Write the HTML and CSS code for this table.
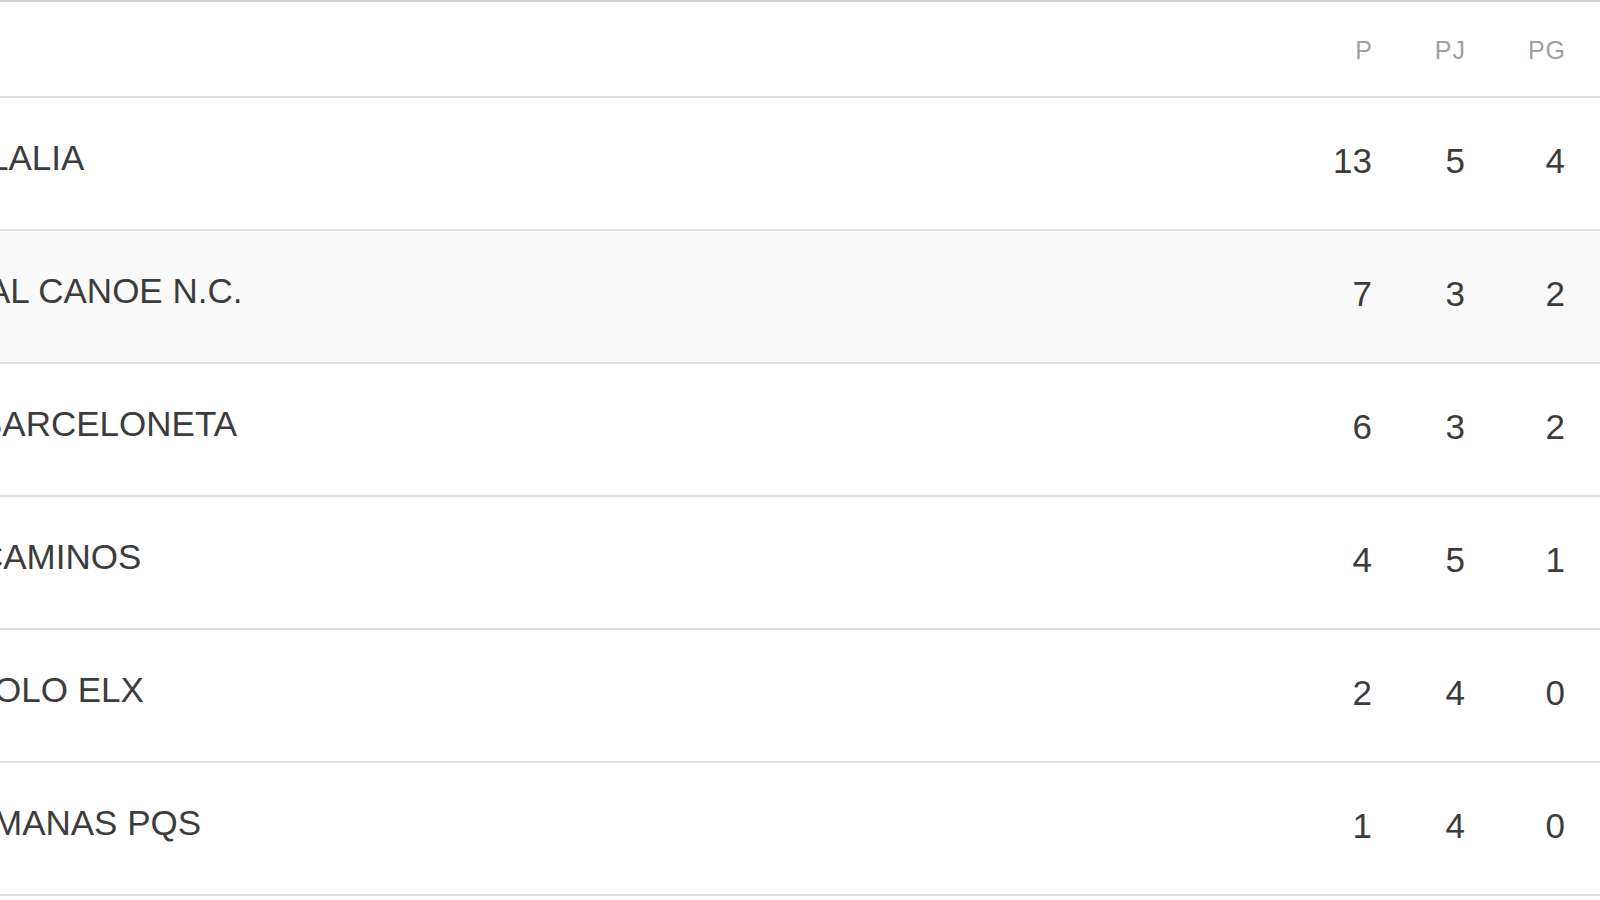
FILE: index.html
```html
<!DOCTYPE html>
<html lang="es">
<head>
<meta charset="utf-8">
<title>Clasificación</title>
<link rel="stylesheet" href="styles.css">
</head>
<body>
<div class="standings">
  <div class="row row--head">
    <div class="cell cell--name"></div>
    <div class="cell cell--num"><span class="head-label">P</span></div>
    <div class="cell cell--num cell--mid"><span class="head-label">PJ</span></div>
    <div class="cell cell--num"><span class="head-label">PG</span></div>
  </div>
  <div class="row">
    <div class="cell cell--name"><span class="name name--c1">LALIA</span></div>
    <div class="cell cell--num">13</div>
    <div class="cell cell--num cell--mid">5</div>
    <div class="cell cell--num">4</div>
  </div>
  <div class="row row--alt">
    <div class="cell cell--name"><span class="name name--c2">AL CANOE N.C.</span></div>
    <div class="cell cell--num">7</div>
    <div class="cell cell--num cell--mid">3</div>
    <div class="cell cell--num">2</div>
  </div>
  <div class="row">
    <div class="cell cell--name"><span class="name name--c3">BARCELONETA</span></div>
    <div class="cell cell--num">6</div>
    <div class="cell cell--num cell--mid">3</div>
    <div class="cell cell--num">2</div>
  </div>
  <div class="row">
    <div class="cell cell--name"><span class="name name--c4">CAMINOS</span></div>
    <div class="cell cell--num">4</div>
    <div class="cell cell--num cell--mid">5</div>
    <div class="cell cell--num">1</div>
  </div>
  <div class="row">
    <div class="cell cell--name"><span class="name name--c5">OLO ELX</span></div>
    <div class="cell cell--num">2</div>
    <div class="cell cell--num cell--mid">4</div>
    <div class="cell cell--num">0</div>
  </div>
  <div class="row">
    <div class="cell cell--name"><span class="name name--c6">MANAS PQS</span></div>
    <div class="cell cell--num">1</div>
    <div class="cell cell--num cell--mid">4</div>
    <div class="cell cell--num">0</div>
  </div>
</div>
</body>
</html>
```
FILE: styles.css
```css
html, body {
  margin: 0;
  padding: 0;
  background: #ffffff;
  overflow: hidden;
}

body {
  font-family: "Liberation Sans", Arial, sans-serif;
  color: #3c3c3c;
  width: 1600px;
  height: 900px;
}

.standings {
  border-top: 2px solid #cfcfcf;
  display: flex;
  flex-direction: column;
}

.row {
  display: grid;
  grid-template-columns: 1fr 100px 93px 100px;
  padding-right: 35px;
  height: 131px;
  border-bottom: 2px solid #dedede;
  background: #ffffff;
}

.row--alt {
  background: #f9f9f9;
}

.row--head {
  height: 94px;
}

.cell {
  font-size: 35px;
  line-height: 35px;
}

.cell--name {
  overflow: hidden;
  white-space: nowrap;
  padding-top: 42px;
}

.cell--num {
  text-align: right;
  padding-top: 45px;
}

.row--head .cell--num {
  padding-top: 36px;
  font-size: 25px;
  line-height: 25px;
}

.head-label {
  color: #a0a0a0;
  letter-spacing: 1px;
  margin-right: -1px;
}

.name {
  display: inline-block;
}

.name--c1 { margin-left: -11px; }
.name--c2 { margin-left: -13px; }
.name--c3 { margin-left: -21px; }
.name--c4 { margin-left: -22px; }
.name--c5 { margin-left: -6px; }
.name--c6 { margin-left: -7px; }
```
